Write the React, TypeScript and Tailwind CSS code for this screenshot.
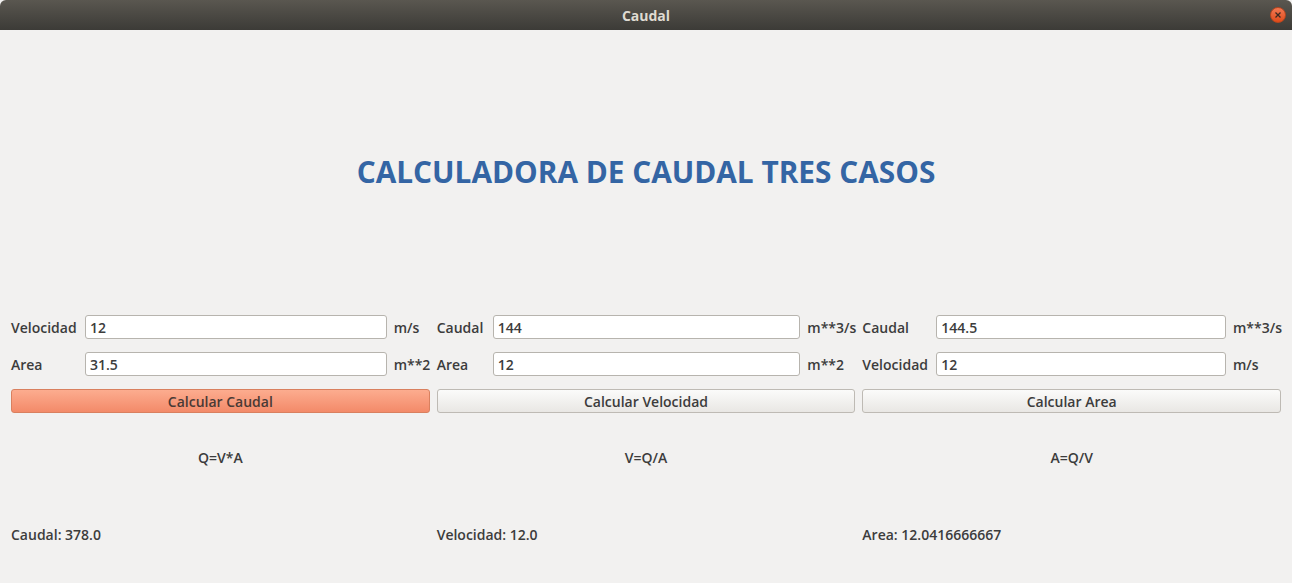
import React, { useState } from 'react';

const font = { fontFamily: '"Open Sans", "Noto Sans", sans-serif' };

type Field = { label: string; value: string; unit: string };

const Column: React.FC<{
  labelW: string;
  unitW: string;
  fields: Field[];
  button: string;
  primary?: boolean;
  formula: string;
  result: string;
}> = ({ labelW, unitW, fields, button, primary, formula, result }) => {
  const [vals, setVals] = useState(fields.map((f) => f.value));
  return (
    <div className="flex flex-col">
      {fields.map((f, i) => (
        <div key={i} className={`flex items-center h-[24px] gap-[7px] ${i > 0 ? 'mt-[13px]' : ''}`}>
          <span className={`${labelW} shrink-0 text-[14px] font-semibold text-[#3c3c3c] pt-[1px]`}>{f.label}</span>
          <input
            className="flex-1 min-w-0 h-[24px] bg-white border border-[#b7b4ae] rounded-[3px] px-[4px] text-[14px] font-semibold text-[#3c3c3c] outline-none"
            value={vals[i]}
            onChange={(e) => setVals(vals.map((v, j) => (j === i ? e.target.value : v)))}
          />
          <span className={`${unitW} shrink-0 text-[14px] font-semibold text-[#3c3c3c] pt-[1px] whitespace-nowrap`}>{f.unit}</span>
        </div>
      ))}
      <button
        className={
          primary
            ? 'mt-[13px] h-[24px] rounded-[3px] border border-[#d9805f] bg-gradient-to-b from-[#fcac8f] to-[#f38a69] text-[14px] font-semibold text-[#4a3a35]'
            : 'mt-[13px] h-[24px] rounded-[3px] border border-[#bebab4] bg-gradient-to-b from-[#fbfbfa] to-[#e9e7e4] text-[14px] font-semibold text-[#3c3c3c]'
        }
      >
        {button}
      </button>
      <div className="mt-[35px] h-[18px] flex items-center justify-center text-[14px] font-semibold text-[#3c3c3c]">
        {formula}
      </div>
      <div className="mt-[59px] h-[18px] flex items-center text-[14px] font-semibold text-[#3c3c3c]">{result}</div>
    </div>
  );
};

export default function App() {
  return (
    <div className="w-[1292px] h-[583px] bg-[#f2f1f0] flex flex-col overflow-hidden" style={font}>
      {/* window title bar */}
      <div className="h-[30px] shrink-0 relative flex items-center justify-center bg-gradient-to-b from-[#5a5750] to-[#3c3b37] rounded-t-[6px]">
        <span className="text-[14px] font-bold text-[#dfdbd2]">Caudal</span>
        <div className="absolute right-[6px] top-[7px] w-[16px] h-[16px] rounded-full bg-gradient-to-b from-[#f27851] to-[#df4a16] border border-[#b8461f] flex items-center justify-center">
          <svg width="8" height="8" viewBox="0 0 8 8">
            <path d="M1.5 1.5 L6.5 6.5 M6.5 1.5 L1.5 6.5" stroke="#3c2a22" strokeWidth="1.3" />
          </svg>
        </div>
      </div>

      <div className="h-[285px] shrink-0 flex items-center justify-center">
        <h1 className="text-[29.8px] font-bold text-[#3465a4]">CALCULADORA DE CAUDAL TRES CASOS</h1>
      </div>

      <div className="grid grid-cols-3 gap-x-[7px] px-[11px]">
        <Column
          labelW="w-[67px]"
          unitW="w-[36px]"
          fields={[
            { label: 'Velocidad', value: '12', unit: 'm/s' },
            { label: 'Area', value: '31.5', unit: 'm**2' },
          ]}
          button="Calcular Caudal"
          primary
          formula="Q=V*A"
          result="Caudal: 378.0"
        />
        <Column
          labelW="w-[49px]"
          unitW="w-[48px]"
          fields={[
            { label: 'Caudal', value: '144', unit: 'm**3/s' },
            { label: 'Area', value: '12', unit: 'm**2' },
          ]}
          button="Calcular Velocidad"
          formula="V=Q/A"
          result="Velocidad: 12.0"
        />
        <Column
          labelW="w-[67px]"
          unitW="w-[48px]"
          fields={[
            { label: 'Caudal', value: '144.5', unit: 'm**3/s' },
            { label: 'Velocidad', value: '12', unit: 'm/s' },
          ]}
          button="Calcular Area"
          formula="A=Q/V"
          result="Area: 12.0416666667"
        />
      </div>
    </div>
  );
}
